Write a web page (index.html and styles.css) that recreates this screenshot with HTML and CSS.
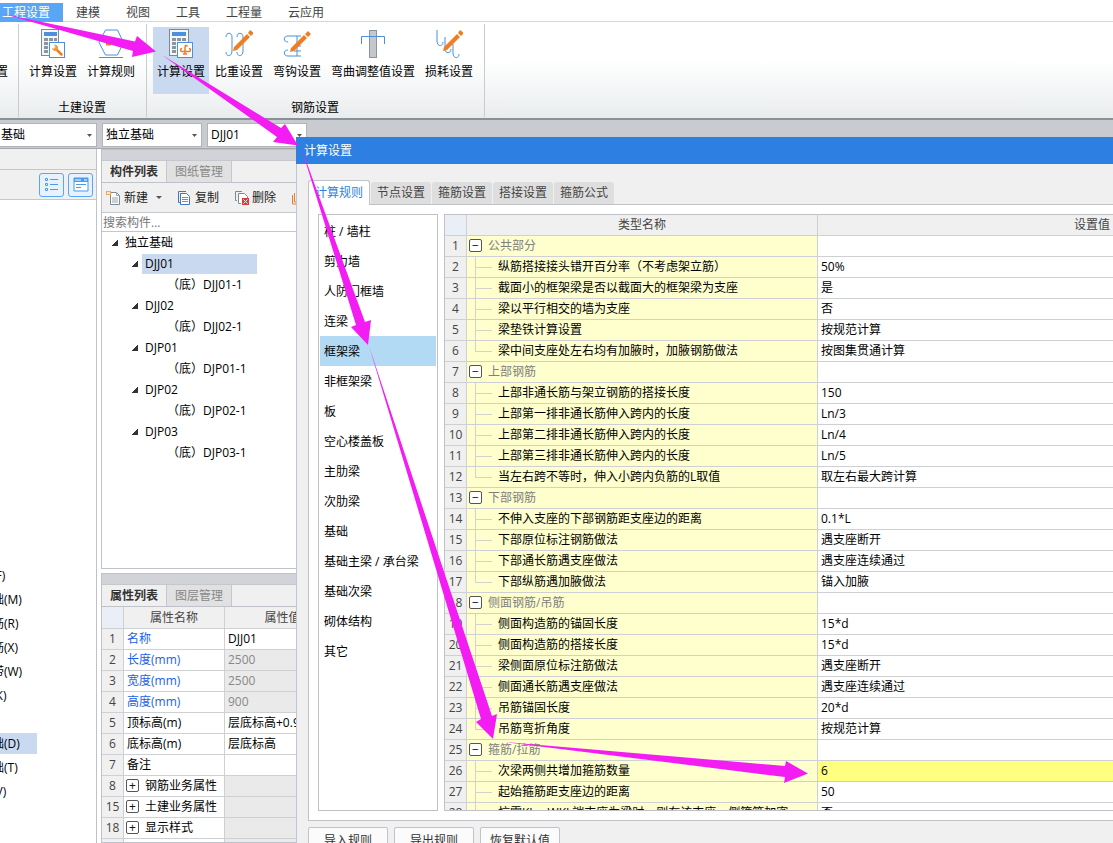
FILE: index.html
```html
<!DOCTYPE html>
<html lang="zh-CN">
<head>
<meta charset="utf-8">
<title>计算设置</title>
<link rel="stylesheet" href="styles.css">
</head>
<body>
<nav class="menu">
  <button class="menu-item active">工程设置</button>
  <button class="menu-item">建模</button>
  <button class="menu-item">视图</button>
  <button class="menu-item">工具</button>
  <button class="menu-item">工程量</button>
  <button class="menu-item">云应用</button>
</nav>

<header class="ribbon">
  <section class="group clipped"><div class="tools"><button class="tool"><span class="tool-icon"></span>置</button></div></section>
  <section class="group">
    <div class="tools">
      <button class="tool">
        <svg class="tool-icon" viewBox="0 0 28 30"><rect x="2.500" y=".5" width="17" height="26" fill="#f4f6f8" stroke="#7d8a96"/><rect x="5" y="3" width="13" height="4" fill="#4a90dc"/><path d="M5 9h4v3H5zM10 9h4v3h-4zM15 9h3v3h-3zM5 13h4v3H5zM5 17h4v3H5zM5 21h4v3H5z" fill="#8a959f"/><rect x="10.500" y="13.500" width="15" height="15" fill="#fff" stroke="#4a90dc"/><path d="M16.500 19.500l6 6" stroke="#ef7d22" stroke-width="2.500" stroke-linecap="round"/><path d="M15 16c3-1 5 2 3.500 4.500s-5 1.500-5.500-1.500l2.500 1 1.500-1.500z" fill="#ef9a3a"/></svg>
        计算设置
      </button>
      <button class="tool">
        <svg class="tool-icon" viewBox="0 0 28 30"><path d="M8.500 1h12l6 12.500-6 12.500h-12L2 13.500zM2 28.500h24" fill="none" stroke="#4a90dc"/><path d="M9 15h5" stroke="#ef7d22" stroke-width="3"/></svg>
        计算规则
      </button>
    </div>
    <div class="group-name">土建设置</div>
  </section>
  <section class="group">
    <div class="tools">
      <button class="tool selected">
        <svg class="tool-icon" viewBox="0 0 28 30"><rect x="2.500" y=".5" width="19" height="26" fill="#f4f6f8" stroke="#7d8a96"/><rect x="5" y="3" width="14" height="4" fill="#4a90dc"/><path d="M5 9h4v3H5zM10 9h4v3h-4zM15 9h4v3h-4zM5 13h4v3H5zM5 17h4v3H5zM5 21h4v3H5z" fill="#8a959f"/><rect x="10.500" y="13.500" width="15" height="15" fill="#fff" stroke="#4a90dc"/><path d="M20.500 17.500c-1.500-2-2.500-1-2.500 1v6.500M15 19.500c-2 0-2 3 0 3h7c2 0 2-3 0-3M16 25h4" fill="none" stroke="#ef7d22" stroke-width="1.500"/></svg>
        计算设置
      </button>
      <button class="tool">
        <svg class="tool-icon" viewBox="0 0 28 30"><path d="M1 8c0-5 6-5 6 0v14c0 6-6 6-6 1M12 8c0-5 6-5 6 0v14c0 6-6 6-6 1" fill="none" stroke="#4a90dc"/><path d="M8 22l1-4L22 5l3 3-13 13zM23 4l2-3 4 3-3 3z" fill="#ef7d22"/></svg>
        比重设置
      </button>
      <button class="tool">
        <svg class="tool-icon" viewBox="0 0 28 30"><path d="M18 7H5c-5 0-5 6 0 6M18 27H5c-5 0-5-6 0-6M14 7v20M11 17h7M11 22h7" fill="none" stroke="#4a90dc"/><path d="M7 23l1-4L21 6l3 3-13 13zM22 5l3-3 3 3-3 3z" fill="#ef7d22"/></svg>
        弯钩设置
      </button>
      <button class="tool">
        <svg class="tool-icon" viewBox="0 0 28 30"><rect x="10.500" y="1.500" width="7" height="27" fill="#c4c8cc" stroke="#8a949c"/><path d="M2.500 15V7.500h23V15" fill="none" stroke="#4a90dc"/></svg>
        弯曲调整值设置
      </button>
      <button class="tool">
        <svg class="tool-icon" viewBox="0 0 28 30"><path d="M2 1v11c0 6 6 6 6 1M10 8v12c0 5 6 5 6 0M18 15v9c0 6 6 6 6 1" fill="none" stroke="#4a90dc"/><path d="M8 22l1-4L22 5l3 3-13 13zM23 4l2-3 4 3-3 3z" fill="#ef7d22"/></svg>
        损耗设置
      </button>
    </div>
    <div class="group-name">钢筋设置</div>
  </section>
</header>

<div class="selectors">
  <select aria-label="构件类别"><option>基础</option></select>
  <select aria-label="构件类型"><option>独立基础</option></select>
  <select aria-label="构件"><option>DJJ01</option></select>
</div>

<main class="workspace">
  <aside class="navigator">
    <div class="nav-head"></div>
    <div class="nav-views">
      <button class="view" aria-label="列表视图"><svg viewBox="0 0 16 16"><path d="M1.500 1.500h2v2h-2zM1.500 6.500h2v2h-2zM1.500 11.500h2v2h-2zM6 2.500h8M6 7.500h8M6 12.500h8" fill="none" stroke="#4a9be8"/></svg></button>
      <button class="view" aria-label="面板视图"><svg viewBox="0 0 16 16"><path d="M1 1h14v13H1z" fill="#fff" stroke="#4a9be8"/><path d="M1 1h14v4H1z" fill="#4a9be8"/><path d="M3 2v2M5 2v2M7 2v2M11 3h3" stroke="#fff"/><path d="M3 7.500h10M3 10.500h5" stroke="#4a9be8"/></svg></button>
    </div>
    <ul class="nav-list">
      <li>(F)</li><li>础(M)</li><li>筋(R)</li><li>筋(X)</li><li>带(W)</li><li>(K)</li><li></li><li class="current">础(D)</li><li>础(T)</li><li>(V)</li>
    </ul>
  </aside>

  <div class="docks">
    <section class="dock components">
      <div class="dock-bar"></div>
      <div class="dock-tabs"><button class="dock-tab active">构件列表</button><button class="dock-tab">图纸管理</button></div>
      <div class="actions">
        <button class="action"><svg viewBox="0 0 16 16"><path d="M4.500 2.500h6l3 3v9h-9z" fill="#fff" stroke="#7d8a96"/><path d="M10.500 2.500v3h3M6 8h6M6 10h6M6 12h6" fill="none" stroke="#9aa4ad"/><path d="M0 1h5v4H0z" fill="#f7a13a"/><path d="M1 2l3 2M4 2L1 4" stroke="#fff"/></svg>新建<i class="caret"></i></button>
        <button class="action"><svg viewBox="0 0 16 16"><path d="M9 1.500H1.500v11H3" fill="none" stroke="#3f77c4"/><path d="M3.500 3.500h6l3 3v8h-9z" fill="#fff" stroke="#3f77c4"/><path d="M5 7.500h6M5 9.500h6M5 11.500h6" stroke="#5d92d8"/></svg>复制</button>
        <button class="action"><svg viewBox="0 0 16 16"><path d="M8 1.500H1.500v9H3" fill="none" stroke="#7d8a96"/><path d="M7 13.500H4.500v-10h6l3 3V8" fill="#fff" stroke="#7d8a96"/><path d="M8 8h7v7H8z" fill="#d63c3c"/><path d="M9.500 9.500l4 4M13.500 9.500l-4 4" stroke="#fff"/></svg>删除</button>
        <button class="action" aria-label="层间复制"><svg viewBox="0 0 16 16"><path d="M1.500 5v9H10M3.500 3v9H11" fill="none" stroke="#ef7d22"/><path d="M6 1.500h8v9H6z" fill="#fff" stroke="#3f77c4"/></svg></button>
      </div>
      <input class="search" type="text" placeholder="搜索构件..." aria-label="搜索构件">
      <ul class="tree">
        <li class="l1"><i class="open"></i><span>独立基础</span></li>
        <li class="l2"><i class="open"></i><span class="picked">DJJ01</span></li>
        <li class="l3"><span>（底）DJJ01-1</span></li>
        <li class="l2"><i class="open"></i><span>DJJ02</span></li>
        <li class="l3"><span>（底）DJJ02-1</span></li>
        <li class="l2"><i class="open"></i><span>DJP01</span></li>
        <li class="l3"><span>（底）DJP01-1</span></li>
        <li class="l2"><i class="open"></i><span>DJP02</span></li>
        <li class="l3"><span>（底）DJP02-1</span></li>
        <li class="l2"><i class="open"></i><span>DJP03</span></li>
        <li class="l3"><span>（底）DJP03-1</span></li>
      </ul>
    </section>

    <section class="dock properties">
      <div class="dock-bar"></div>
      <div class="dock-tabs"><button class="dock-tab active">属性列表</button><button class="dock-tab">图层管理</button></div>
      <table class="grid props">
        <colgroup><col class="c-num"><col class="c-prop"><col></colgroup>
        <thead><tr><th class="corner"></th><th>属性名称</th><th>属性值</th></tr></thead>
        <tbody>
          <tr><th>1</th><td class="key">名称</td><td>DJJ01</td></tr>
          <tr><th>2</th><td class="key">长度(mm)</td><td class="locked">2500</td></tr>
          <tr><th>3</th><td class="key">宽度(mm)</td><td class="locked">2500</td></tr>
          <tr><th>4</th><td class="key">高度(mm)</td><td class="locked">900</td></tr>
          <tr><th>5</th><td>顶标高(m)</td><td>层底标高+0.9</td></tr>
          <tr><th>6</th><td>底标高(m)</td><td>层底标高</td></tr>
          <tr><th>7</th><td>备注</td><td></td></tr>
          <tr><th>8</th><td class="fold"><div class="cell"><button class="box" aria-label="展开">+</button>钢筋业务属性</div></td><td class="locked"></td></tr>
          <tr><th>15</th><td class="fold"><div class="cell"><button class="box" aria-label="展开">+</button>土建业务属性</div></td><td class="locked"></td></tr>
          <tr><th>18</th><td class="fold"><div class="cell"><button class="box" aria-label="展开">+</button>显示样式</div></td><td class="locked"></td></tr>
          <tr><th></th><td class="fold"><div class="cell"><button class="box" aria-label="展开">+</button></div></td><td class="locked"></td></tr>
        </tbody>
      </table>
    </section>
  </div>
</main>

<div class="dialog" role="dialog" aria-labelledby="dialog-title">
  <div class="title" id="dialog-title">计算设置</div>
  <div class="tabs">
    <button class="tab active">计算规则</button><button class="tab">节点设置</button><button class="tab">箍筋设置</button><button class="tab">搭接设置</button><button class="tab">箍筋公式</button>
  </div>
  <div class="page">
    <ul class="kinds">
      <li>柱 / 墙柱</li><li>剪力墙</li><li>人防门框墙</li><li>连梁</li><li class="current">框架梁</li><li>非框架梁</li><li>板</li><li>空心楼盖板</li><li>主肋梁</li><li>次肋梁</li><li>基础</li><li>基础主梁 / 承台梁</li><li>基础次梁</li><li>砌体结构</li><li>其它</li>
    </ul>
    <div class="rules-frame">
      <table class="grid rules">
        <colgroup><col class="c-num"><col class="c-rule"><col></colgroup>
        <thead><tr><th class="corner"></th><th>类型名称</th><th class="value-head">设置值</th></tr></thead>
        <tbody>
          <tr><th>1</th><td class="fold"><div class="cell"><button class="box" aria-label="折叠">−</button>公共部分</div></td><td></td></tr>
          <tr><th>2</th><td class="leaf">纵筋搭接接头错开百分率（不考虑架立筋）</td><td>50%</td></tr>
          <tr><th>3</th><td class="leaf">截面小的框架梁是否以截面大的框架梁为支座</td><td>是</td></tr>
          <tr><th>4</th><td class="leaf">梁以平行相交的墙为支座</td><td>否</td></tr>
          <tr><th>5</th><td class="leaf">梁垫铁计算设置</td><td>按规范计算</td></tr>
          <tr><th>6</th><td class="leaf last">梁中间支座处左右均有加腋时，加腋钢筋做法</td><td>按图集贯通计算</td></tr>
          <tr><th>7</th><td class="fold"><div class="cell"><button class="box" aria-label="折叠">−</button>上部钢筋</div></td><td></td></tr>
          <tr><th>8</th><td class="leaf">上部非通长筋与架立钢筋的搭接长度</td><td>150</td></tr>
          <tr><th>9</th><td class="leaf">上部第一排非通长筋伸入跨内的长度</td><td>Ln/3</td></tr>
          <tr><th>10</th><td class="leaf">上部第二排非通长筋伸入跨内的长度</td><td>Ln/4</td></tr>
          <tr><th>11</th><td class="leaf">上部第三排非通长筋伸入跨内的长度</td><td>Ln/5</td></tr>
          <tr><th>12</th><td class="leaf last">当左右跨不等时，伸入小跨内负筋的L取值</td><td>取左右最大跨计算</td></tr>
          <tr><th>13</th><td class="fold"><div class="cell"><button class="box" aria-label="折叠">−</button>下部钢筋</div></td><td></td></tr>
          <tr><th>14</th><td class="leaf">不伸入支座的下部钢筋距支座边的距离</td><td>0.1*L</td></tr>
          <tr><th>15</th><td class="leaf">下部原位标注钢筋做法</td><td>遇支座断开</td></tr>
          <tr><th>16</th><td class="leaf">下部通长筋遇支座做法</td><td>遇支座连续通过</td></tr>
          <tr><th>17</th><td class="leaf last">下部纵筋遇加腋做法</td><td>锚入加腋</td></tr>
          <tr><th>18</th><td class="fold"><div class="cell"><button class="box" aria-label="折叠">−</button>侧面钢筋/吊筋</div></td><td></td></tr>
          <tr><th>19</th><td class="leaf">侧面构造筋的锚固长度</td><td>15*d</td></tr>
          <tr><th>20</th><td class="leaf">侧面构造筋的搭接长度</td><td>15*d</td></tr>
          <tr><th>21</th><td class="leaf">梁侧面原位标注筋做法</td><td>遇支座断开</td></tr>
          <tr><th>22</th><td class="leaf">侧面通长筋遇支座做法</td><td>遇支座连续通过</td></tr>
          <tr><th>23</th><td class="leaf">吊筋锚固长度</td><td>20*d</td></tr>
          <tr><th>24</th><td class="leaf last">吊筋弯折角度</td><td>按规范计算</td></tr>
          <tr><th>25</th><td class="fold"><div class="cell"><button class="box" aria-label="折叠">−</button>箍筋/拉筋</div></td><td></td></tr>
          <tr><th>26</th><td class="leaf">次梁两侧共增加箍筋数量</td><td class="marked">6</td></tr>
          <tr><th>27</th><td class="leaf">起始箍筋距支座边的距离</td><td>50</td></tr>
          <tr><th>28</th><td class="leaf">抗震KL、WKL端支座为梁时，则在该支座一侧箍筋加密</td><td>否</td></tr>
        </tbody>
      </table>
    </div>
  </div>
  <div class="footer"><button class="push">导入规则</button><button class="push">导出规则</button><button class="push">恢复默认值</button></div>
</div>

<svg class="arrows" width="1113" height="843" viewBox="0 0 1113 843" fill="#f31df3" aria-hidden="true">
  <path d="M4 14L135 41.500L137 36L156 51.500L132 57L133 51z"/>
  <path d="M162 55L281 128L285 124L298 145.500L273 142L277 137z"/>
  <path d="M301 147L365 322L371 320L368 345L351 327L356 325z"/>
  <path d="M369 346L492 716L497 714L493 739L476 722L481 719z"/>
  <path d="M505 742L785 766L786 761L808 773.500L784 783L785 777z"/>
</svg>
</body>
</html>
```

FILE: styles.css
```css
* { box-sizing: border-box; }
html, body { height: 100%; }
body {
  margin: 0;
  position: relative;
  display: flex;
  flex-direction: column;
  overflow: hidden;
  background: #fff;
  color: #000;
  font: 12px/20px "Open Sans", "Noto Sans CJK SC", sans-serif;
}
button, input, select { font: inherit; color: inherit; margin: 0; }
button { padding: 0; border: 0; background: none; white-space: nowrap; }
ul { list-style: none; margin: 0; padding: 0; }

/* menu */
.menu { display: flex; flex: none; padding-top: 3px; height: 22px; border-bottom: 1px solid #d5d7da; }
.menu-item { padding: 0 13px; height: 19px; line-height: 19px; color: #444; }
.menu-item.active { padding-left: 2px; background: #58a6f5; color: #fff; }

/* ribbon */
.ribbon {
  display: flex;
  flex: none;
  height: 98px;
  padding: 2px 0 1px;
  border-bottom: 2px solid #8b9096;
  background: linear-gradient(#fff 40%, #e9ecee);
}
.group { display: flex; flex-direction: column; padding: 3px 7px 0 6px; border-right: 1px solid #c9cccf; }
.group.clipped { width: 19px; padding-left: 0; overflow: hidden; }
.group.clipped .tool { align-items: flex-end; width: 8px; padding: 2px 0 0; }
.tools { display: flex; gap: 2px; }
.tool { display: flex; flex-direction: column; align-items: center; height: 67px; padding: 2px 4px 0; }
.tool.selected { background: #c9daf0; }
.tool-icon { display: block; width: 28px; height: 30px; margin-bottom: 3px; flex: none; }
.group-name { margin-top: 4px; text-align: center; }

/* selectors */
.selectors { display: flex; flex: none; gap: 5px; height: 29px; padding: 3px 0 2px; background: #c8cbd0; border-bottom: 1px solid #a4a7ab; }
.selectors select {
  width: 100px;
  height: 24px;
  padding: 0 3px;
  border: 1px solid #b0b3b7;
  border-radius: 0;
  appearance: none;
  background: #fff url("data:image/svg+xml,%3Csvg xmlns='http://www.w3.org/2000/svg' width='5' height='3'%3E%3Cpath d='M0 0h5L2.5 3z' fill='%23555'/%3E%3C/svg%3E") no-repeat right 4px center / 5px 3px;
}
.selectors select:first-child { width: 97px; padding-left: 1px; border-left: 0; }

/* workspace */
.workspace { display: flex; flex: 1; min-height: 0; }
.navigator { width: 97px; flex: none; overflow: hidden; border-right: 1px solid #bfc2c8; }
.nav-head { height: 21px; background: #f0f0f0; border-bottom: 1px solid #c4c7cc; }
.nav-views { display: flex; justify-content: flex-end; gap: 4px; height: 30px; padding: 3px 3px 0 0; background: #f0f0f0; border-bottom: 1px solid #c4c7cc; }
.view { display: flex; align-items: center; justify-content: center; width: 25px; height: 24px; border: 1px solid #58a6f5; border-radius: 3px; background: #e8f2fd; }
.view svg { width: 16px; height: 16px; }
.nav-list { margin: 365px 0 0 -8px; }
.nav-list li { height: 21px; margin-bottom: 3px; line-height: 22px; white-space: nowrap; }
.nav-list .current { width: 45px; background: #c9daf0; }

.docks { display: flex; flex-direction: column; flex: none; gap: 4px; width: 241px; margin-left: 4px; }
.dock { border: 1px solid #bfc2c8; }
.components { display: flex; flex-direction: column; height: 420px; }
.dock-bar { flex: none; height: 11px; background: #d2d3d8; border-bottom: 1px solid #c4c7cc; }
.dock-tabs { display: flex; flex: none; height: 22px; background: #f0f0f0; border-bottom: 1px solid #bfc2c8; }
.dock-tab { width: 65px; border-right: 1px solid #c4c7cc; background: #e1e1e1; color: #888; }
.dock-tab.active { background: #f0f0f0; color: #333; font-weight: bold; }
.actions { display: flex; flex: none; gap: 15px; height: 30px; padding: 0 4px; background: #f0f0f0; border-bottom: 1px solid #c4c7cc; color: #222; }
.action { display: flex; align-items: center; gap: 2px; }
.action svg { width: 16px; height: 16px; flex: none; }
.caret { border: 3px solid transparent; border-top-color: #555; border-bottom: 0; margin-left: 6px; }
.search { flex: none; height: 19px; padding: 1px 1px 0; border: 0; border-bottom: 1px solid #c4c7cc; outline: 0; background: #fff; }
.search::placeholder { color: #777; opacity: 1; }
.tree li { display: flex; align-items: center; height: 21px; }
.tree span { padding-left: 3px; }
.tree .l1 { padding-left: 9px; }
.tree .l2 { padding-left: 29px; }
.tree .l3 { padding-left: 62px; }
.open { width: 7px; height: 6px; margin-right: 4px; background: linear-gradient(to bottom right, transparent 50%, #333 50%); }
.tree .picked { width: 115px; background: #c9daf0; }
.properties { flex: 1; min-height: 0; overflow: hidden; }

/* grids */
.grid { width: 100%; table-layout: fixed; border-collapse: separate; border-spacing: 0; }
.c-num { width: 22px; }
.c-prop { width: 101px; }
.c-rule { width: 351px; }
.grid th, .grid td { height: 21px; padding: 0 3px; border-right: 1px solid #cfd0d3; border-bottom: 1px solid #cfd0d3; line-height: 20px; white-space: nowrap; overflow: hidden; }
.grid th { background: #f0f0f0; color: #444; font-weight: normal; }
.grid tbody th { padding: 0; }
.grid .corner { background: #eaeff7; }
.grid td { text-align: left; }
.props thead th { height: 22px; }
.props td:last-child { padding-left: 3px; }
.props .fold { padding: 0 2px; }
.props .key { color: #1b5fe8; }
.props .locked { background: #eaeaea; color: #888; }
.cell { display: flex; align-items: center; gap: 6px; height: 20px; }
.box { flex: none; display: flex; align-items: center; justify-content: center; width: 13px; height: 13px; margin-bottom: 2px; border: 1px solid #555; border-radius: 2px; background: #fff; color: #111; line-height: 11px; }

/* dialog */
.dialog {
  position: absolute;
  inset: 137px 0 -22px 296px;
  display: flex;
  flex-direction: column;
  background: #f0f0f0;
  border-left: 1px solid #bcc4d6;
}
.title { flex: none; height: 27px; margin-left: -1px; padding-left: 8px; line-height: 27px; background: #2d7fe2; color: #fff; }
.tabs { display: flex; flex: none; align-items: flex-end; gap: 1px; height: 40px; padding-left: 11px; }
.tab { width: 60px; height: 22px; border-radius: 3px 3px 0 0; background: #dedede; color: #444; }
.tab.active { position: relative; z-index: 1; width: 62px; height: 25px; margin-bottom: -1px; border: 1px solid #c0c2c6; border-bottom: 0; background: #fff; color: #2d7fe2; }
.page { display: flex; flex: 1; gap: 6px; min-height: 0; margin-left: 11px; padding: 9px 0 9px 9px; border: 1px solid #c0c2c6; border-right: 0; background: #fff; }
.kinds { flex: none; width: 120px; padding: 1px; border: 1px solid #c0c2c6; }
.kinds li { height: 30px; padding-left: 4px; line-height: 31px; }
.kinds .current { background: #b3daf5; }
.rules-frame { flex: 1; min-width: 0; overflow: hidden; border: 1px solid #c0c2c6; border-right: 0; }
.rules thead th { height: 21px; }
.rules .value-head { text-align: right; }
.rules td:nth-child(2) { background-color: #ffffce; }
.rules .fold { padding-left: 2px; color: #808080; }
.rules .leaf {
  padding-left: 31px;
  background-image: linear-gradient(#d3d3c8, #d3d3c8), linear-gradient(#d3d3c8, #d3d3c8);
  background-repeat: no-repeat;
  background-position: 8px 0, 9px 10px;
  background-size: 1px 100%, 16px 1px;
}
.rules .last { background-size: 1px 11px, 16px 1px; }
.rules .marked { background: #ffff80; }
.rules td:last-child, .rules .value-head { border-right: 0; }
.footer { display: flex; flex: none; gap: 6px; height: 44px; padding: 6px 0 0 11px; }
.push { width: 80px; height: 28px; border: 1px solid #bcc4d0; border-radius: 2px; background: #fbfbfb; color: #333; }

/* callout arrows */
.arrows { position: absolute; z-index: 2; top: 0; left: 0; pointer-events: none; }
```
